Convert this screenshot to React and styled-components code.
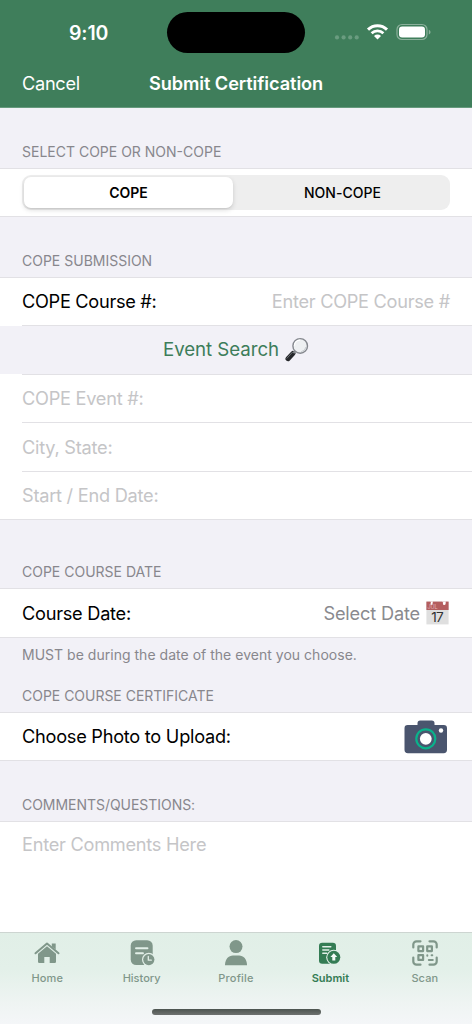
import React from 'react';
import styled, { createGlobalStyle } from 'styled-components';

const Global = createGlobalStyle`
  * { box-sizing: border-box; }
  body { margin: 0; background: #f2f1f7; }
`;

const Screen = styled.div`
  width: 472px;
  height: 1024px;
  display: flex;
  flex-direction: column;
  overflow: hidden;
  background: #f2f1f7;
  color: #000;
  font-family: Inter, 'Liberation Sans', sans-serif;
`;

const Header = styled.header`
  height: 108px;
  flex: none;
  background: #3f7e5b;
  border-bottom: 1px solid #669a7d;
  color: #fff;
`;

const StatusBar = styled.div`
  display: grid;
  grid-template-columns: 167px 138px 1fr;
  height: 66px;
  padding-top: 12px;
`;

const Clock = styled.div`
  padding-left: 69px;
  font-size: 19.5px;
  font-weight: 600;
  line-height: 42px;
  letter-spacing: -0.15px;
`;

const Island = styled.div`
  height: 41px;
  border-radius: 21px;
  background: #000;
`;

const StatusIcons = styled.div`
  display: flex;
  height: 41px;
  padding-left: 29px;
`;

const NavBar = styled.nav`
  display: grid;
  grid-template-columns: 149px 1fr;
  height: 41px;
  line-height: 35px;
  font-size: 18.2px;
`;

const Cancel = styled.span`
  padding-left: 22px;
  letter-spacing: -0.3px;
`;

const Title = styled.span`
  font-weight: 600;
  letter-spacing: -0.09px;
`;

const SectionTitle = styled.div`
  display: flex;
  align-items: flex-end;
  flex: none;
  height: ${(p) => p.$h}px;
  padding: 0 22px 8px;
  font-size: 14px;
  line-height: 17px;
  letter-spacing: ${(p) => p.$ls || 0}px;
  color: #88878d;
`;

const Group = styled.section`
  flex: none;
  background: #fff;
  border-top: 1px solid #e2e1e5;
  border-bottom: 1px solid #e2e1e5;
`;

const Row = styled.div`
  display: flex;
  align-items: center;
  justify-content: ${(p) => (p.$center ? 'center' : 'space-between')};
  height: ${(p) => p.$h || 48}px;
  padding: 0 ${(p) => p.$end || 22}px 0 22px;
  font-size: 18.2px;
  background: ${(p) => (p.$shaded ? '#f2f1f7' : '#fff')};
`;

const Divider = styled.div`
  height: 1px;
  margin-left: 22px;
  background: #e2e1e5;
`;

const tones = { label: '#000', placeholder: '#c5c5c7', value: '#8a8a8e', link: '#3d7d5a' };

const Text = styled.span`
  color: ${(p) => tones[p.$tone || 'label']};
  font-size: ${(p) => p.$size || 18.2}px;
  line-height: 22px;
  padding-bottom: 1px;
  letter-spacing: ${(p) => p.$ls || 0}px;
  white-space: nowrap;
`;

const Inline = styled.div`
  display: flex;
  align-items: center;
  gap: ${(p) => p.$gap}px;
`;

const Segmented = styled.div`
  display: flex;
  width: 428px;
  height: 35px;
  padding: 2px;
  border-radius: 9px;
  background: #eeeeee;
`;

const Segment = styled.div`
  display: flex;
  align-items: center;
  justify-content: center;
  flex: ${(p) => (p.$active ? '0 0 209px' : '1')};
  padding-left: ${(p) => (p.$active ? 0 : 4)}px;
  border-radius: 7px;
  background: ${(p) => (p.$active ? '#fff' : 'transparent')};
  box-shadow: ${(p) => (p.$active ? '0 2px 5px rgba(0,0,0,.14), 0 1px 1px rgba(0,0,0,.05)' : 'none')};
  font-size: 14px;
  font-weight: ${(p) => (p.$active ? 600 : 500)};
  letter-spacing: ${(p) => (p.$active ? -0.03 : 0.05)}px;
`;

const Footnote = styled.div`
  flex: none;
  height: 33px;
  padding: 8px 22px;
  font-size: 14px;
  line-height: 17px;
  letter-spacing: 0.02px;
  color: #88878d;
`;

const Comments = styled.section`
  flex: 1;
  padding: 11px 22px;
  background: #fff;
  border-top: 1px solid #e2e1e5;
  line-height: 22px;
`;

const TabBar = styled.footer`
  flex: none;
  height: 92px;
  border-top: 1px solid #cdd5d1;
  background: linear-gradient(180deg, #e1efe7 0%, #e3f0e9 40%, #eef4f2 75%, #f4f6f8 100%);
`;

const Tabs = styled.div`
  display: grid;
  grid-template-columns: repeat(5, 1fr);
  height: 76px;
`;

const Tab = styled.div`
  display: flex;
  flex-direction: column;
  align-items: center;
  padding-top: 6px;
  color: ${(p) => (p.$active ? '#347c54' : '#80978a')};
  font-size: 11px;
  font-weight: ${(p) => (p.$active ? 600 : 500)};
  line-height: 14px;
  letter-spacing: ${(p) => p.$ls || 0}px;
`;

const TabLabel = styled.span`
  margin-top: 4px;
`;

const HomeIndicator = styled.div`
  width: 169px;
  height: 6px;
  margin: 0 auto;
  border-radius: 3px;
  background: linear-gradient(180deg, #4c544f, #6d716f);
`;

const StatusGlyphs = () => (
  <svg width="100" height="41" viewBox="334 12 100 41">
    <g fill="#6a9c80">
      <circle cx="337" cy="37.4" r="2.1" />
      <circle cx="343.6" cy="37.4" r="2.1" />
      <circle cx="350.2" cy="37.4" r="2.1" />
      <circle cx="356.7" cy="37.4" r="2.1" />
    </g>
    <g fill="none" stroke="#fff" strokeWidth="3">
      <path d="M368 29.6a13.6 13.6 0 0 1 19 0" />
      <path d="M371.6 33.3a8.4 8.4 0 0 1 11.8 0" strokeWidth="2.7" />
    </g>
    <path d="M374 35.9a5 5 0 0 1 7 0L377.5 39.4Z" fill="#fff" />
    <rect x="397" y="24.5" width="30" height="15" rx="5" fill="none" stroke="#8bb09b" strokeWidth="1.2" />
    <rect x="399" y="26.6" width="26" height="10.8" rx="3.2" fill="#fff" />
    <path d="M428.8 29.7c2.3.9 2.3 3.9 0 4.8Z" fill="#8bb09b" />
  </svg>
);

const Magnifier = () => (
  <svg width="24" height="26" viewBox="0 0 24 26">
    <path d="M8 16.4 3 21.7" stroke="#26282b" strokeWidth="5" strokeLinecap="round" />
    <path d="m7.4 15.3-5.5 6" stroke="#6b6f73" strokeWidth="1" strokeLinecap="round" />
    <path d="m8.4 16 2.4-2.6" stroke="#85898d" strokeWidth="2.2" />
    <circle cx="15.2" cy="8.9" r="7.3" fill="#eef0f2" stroke="#85888e" strokeWidth="1.4" />
    <path d="M9.4 8.6a5.8 5.8 0 0 1 5.6-5.5" fill="none" stroke="#fff" strokeWidth="1.4" />
    <path d="M21 10a6 6 0 0 1-4.8 4.7" fill="none" stroke="#c6cace" strokeWidth="1" />
  </svg>
);

const CalendarIcon = () => (
  <svg width="23" height="24" viewBox="0 0 23 24">
    <rect x=".4" y=".6" width="22.2" height="22.8" fill="#dfdfdf" />
    <rect x=".4" y=".6" width="22.2" height="8.4" fill="#b45e5f" />
    <path d="M4.3.6h2.8L5.9 3.8ZM16 .6h4l-1 3Z" fill="#fff" />
    <circle cx="5.5" cy="3" r="1.1" fill="#fff" />
    <circle cx="18.2" cy="2.8" r="1.3" fill="#fff" />
    <text x="1.4" y="8.2" fontSize="5.5" fontFamily="Inter, sans-serif" fill="#e2b6b6">JUL</text>
    <text x="11.2" y="20.8" fontSize="13.6" letterSpacing="-.6" textAnchor="middle" fontWeight="400" fontFamily="Inter, sans-serif" fill="#333">17</text>
  </svg>
);

const CameraIcon = () => (
  <svg width="44" height="34" viewBox="0 0 44 34">
    <path d="M13.5 5V3.2A2.7 2.7 0 0 1 16.2.5h11.6a2.7 2.7 0 0 1 2.7 2.7V5h9.3a3.2 3.2 0 0 1 3.2 3.2v21.6a3.4 3.4 0 0 1-3.4 3.4H3.9a3.4 3.4 0 0 1-3.4-3.4V8.2A3.2 3.2 0 0 1 3.7 5Z" fill="#4a556e" />
    <circle cx="21.8" cy="18.8" r="9.5" fill="#4a556e" stroke="#0ab28b" strokeWidth="2.2" />
    <circle cx="21.8" cy="18.8" r="5.9" fill="#fff" />
    <circle cx="37" cy="10.5" r="2.2" fill="#fff" />
  </svg>
);

const HomeIcon = () => (
  <svg width="28" height="28" viewBox="0 0 28 28">
    <path d="M2.5 14.3 14 4.6l11.5 9.7" fill="none" stroke="currentColor" strokeWidth="2" strokeLinecap="round" strokeLinejoin="round" />
    <path d="M18.8 4.6h3.9V10.8l-3.9-3.2Z" fill="currentColor" />
    <path d="m14 7.3 9 7.4v8.1a1.3 1.3 0 0 1-1.3 1.3h-5v-6.2h-5.4v6.2h-5A1.3 1.3 0 0 1 5 22.8v-8.1Z" fill="currentColor" />
  </svg>
);

const HistoryIcon = () => (
  <svg width="28" height="28" viewBox="0 0 28 28">
    <rect x="2.7" y="1.2" width="22" height="24.8" rx="5.5" fill="currentColor" />
    <path d="M8 9.3h11.5M8 14.3h7" stroke="#e2efe8" strokeWidth="1.9" strokeLinecap="round" />
    <circle cx="20.8" cy="20.6" r="6.8" fill="#e2efe8" />
    <circle cx="20.8" cy="20.6" r="5.6" fill="currentColor" />
    <path d="M20.3 17.5v3.7h3" fill="none" stroke="#e2efe8" strokeWidth="1.3" strokeLinecap="round" strokeLinejoin="round" />
  </svg>
);

const ProfileIcon = () => (
  <svg width="28" height="28" viewBox="0 0 28 28">
    <circle cx="14" cy="7.6" r="6.5" fill="currentColor" />
    <path d="M3 26.2c0-6.2 3.5-9.8 8-9.8h6c4.5 0 8 3.6 8 9.8Z" fill="currentColor" />
  </svg>
);

const SubmitIcon = () => (
  <svg width="28" height="28" viewBox="0 0 28 28">
    <rect x="3" y="3.7" width="17" height="21" rx="3.2" fill="currentColor" />
    <path d="M6.8 7.8h8M6.8 11h6M6.8 14.2h4" stroke="#e2efe8" strokeWidth="1.5" strokeLinecap="round" />
    <circle cx="17.8" cy="18.3" r="7.6" fill="#e2efe8" />
    <circle cx="17.8" cy="18.3" r="6.5" fill="currentColor" />
    <path d="m17.8 14.3 3.4 3.7h-1.9v3.4h-3v-3.4h-1.9Z" fill="#f4faf7" />
  </svg>
);

const ScanIcon = () => (
  <svg width="28" height="28" viewBox="0 0 28 28" fill="none" stroke="currentColor" strokeWidth="2.2" strokeLinecap="round">
    <path d="M2.3 8.5v-3a3.2 3.2 0 0 1 3.2-3.2h4M18.5 2.3h4a3.2 3.2 0 0 1 3.2 3.2v3M25.7 18.5v4a3.2 3.2 0 0 1-3.2 3.2h-4M9.5 25.7h-4a3.2 3.2 0 0 1-3.2-3.2v-4" />
    <path d="M7.4 7.4h4.7v4.7H7.4ZM16.2 7.4h4.7v4.7h-4.7ZM7.4 16.2h4.7v4.7H7.4Z" strokeLinejoin="round" />
    <path d="M16.3 16.3v.4M20.6 16.3h.7M17.8 20.9h4" strokeWidth="2" />
  </svg>
);

export default function App() {
  return (
    <Screen>
      <Global />
      <Header>
        <StatusBar>
          <Clock>9:10</Clock>
          <Island />
          <StatusIcons><StatusGlyphs /></StatusIcons>
        </StatusBar>
        <NavBar>
          <Cancel>Cancel</Cancel>
          <Title>Submit Certification</Title>
        </NavBar>
      </Header>

      <SectionTitle $h={60}>SELECT COPE OR NON-COPE</SectionTitle>
      <Group>
        <Row $h={47}>
          <Segmented>
            <Segment $active>COPE</Segment>
            <Segment>NON-COPE</Segment>
          </Segmented>
        </Row>
      </Group>

      <SectionTitle $h={60}>COPE SUBMISSION</SectionTitle>
      <Group>
        <Row $h={47}>
          <Text $ls={-0.3}>COPE Course #:</Text>
          <Text $tone="placeholder" $ls={-0.28}>Enter COPE Course #</Text>
        </Row>
        <Divider />
        <Row $shaded $center>
          <Inline $gap={6}>
            <Text $tone="link" $size={18.7} $ls={-0.05}>Event Search</Text>
            <Magnifier />
          </Inline>
        </Row>
        <Divider />
        <Row $h={47}>
          <Text $tone="placeholder" $ls={-0.26}>COPE Event #:</Text>
        </Row>
        <Divider />
        <Row>
          <Text $tone="placeholder" $ls={-0.24}>City, State:</Text>
        </Row>
        <Divider />
        <Row $h={47}>
          <Text $tone="placeholder" $ls={-0.25}>Start / End Date:</Text>
        </Row>
      </Group>

      <SectionTitle $h={68}>COPE COURSE DATE</SectionTitle>
      <Group>
        <Row $end={23}>
          <Text $ls={-0.26}>Course Date:</Text>
          <Inline $gap={6}>
            <Text $tone="value" $ls={-0.17}>Select Date</Text>
            <CalendarIcon />
          </Inline>
        </Row>
      </Group>
      <Footnote>MUST be during the date of the event you choose.</Footnote>

      <SectionTitle $h={41} $ls={-0.02}>COPE COURSE CERTIFICATE</SectionTitle>
      <Group>
        <Row $h={47} $end={24}>
          <Text $ls={-0.26}>Choose Photo to Upload:</Text>
          <CameraIcon />
        </Row>
      </Group>

      <SectionTitle $h={60} $ls={-0.04}>COMMENTS/QUESTIONS:</SectionTitle>
      <Comments>
        <Text $tone="placeholder" $ls={-0.26}>Enter Comments Here</Text>
      </Comments>

      <TabBar>
        <Tabs>
          <Tab $ls={0.13}><HomeIcon /><TabLabel>Home</TabLabel></Tab>
          <Tab><HistoryIcon /><TabLabel>History</TabLabel></Tab>
          <Tab $ls={0.2}><ProfileIcon /><TabLabel>Profile</TabLabel></Tab>
          <Tab $active><SubmitIcon /><TabLabel>Submit</TabLabel></Tab>
          <Tab $ls={0.06}><ScanIcon /><TabLabel>Scan</TabLabel></Tab>
        </Tabs>
        <HomeIndicator />
      </TabBar>
    </Screen>
  );
}
